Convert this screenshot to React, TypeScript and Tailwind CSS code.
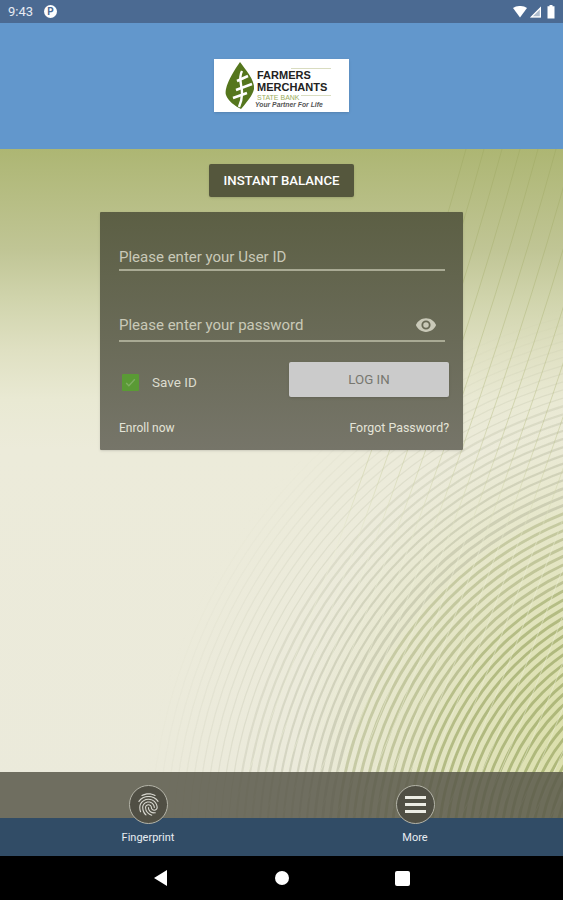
import React from "react";
import { MdFingerprint } from "react-icons/md";

const arcRadii = Array.from({ length: 62 }, (_, i) => 90 + i * 7.8);
const sweepLines = Array.from({ length: 26 }, (_, i) => 466 + i * 18);

const arcColor = (r: number) => {
  if (r < 300) return "#93a05a";
  if (r < 370) return "#9ca46e";
  return "#a6a98e";
};

const Backdrop = () => (
  <svg
    className="absolute inset-0 w-full h-full"
    viewBox="0 0 563 669"
    preserveAspectRatio="none"
  >
    <defs>
      <linearGradient id="base" x1="0" y1="0" x2="0" y2="1">
        <stop offset="0" stopColor="#adb673" />
        <stop offset="0.15" stopColor="#c0c595" />
        <stop offset="0.224" stopColor="#d0d4ac" />
        <stop offset="0.3" stopColor="#dfe0c2" />
        <stop offset="0.374" stopColor="#e9e9d3" />
        <stop offset="0.45" stopColor="#ecebda" />
        <stop offset="1" stopColor="#ebeadb" />
      </linearGradient>
      <radialGradient id="fade" cx="700" cy="701" r="560" gradientUnits="userSpaceOnUse">
        <stop offset="0" stopColor="#fff" stopOpacity="1" />
        <stop offset="0.45" stopColor="#fff" stopOpacity="1" />
        <stop offset="0.74" stopColor="#fff" stopOpacity="0.55" />
        <stop offset="0.88" stopColor="#fff" stopOpacity="0.25" />
        <stop offset="1" stopColor="#fff" stopOpacity="0" />
      </radialGradient>
      <radialGradient id="tint" cx="640" cy="600" r="340" gradientUnits="userSpaceOnUse">
        <stop offset="0" stopColor="#d6dc9c" stopOpacity="0.95" />
        <stop offset="1" stopColor="#d6dc9c" stopOpacity="0" />
      </radialGradient>
      <linearGradient id="sweep" gradientUnits="userSpaceOnUse" x1="0" y1="0" x2="0" y2="669">
        <stop offset="0" stopColor="#98a25a" stopOpacity="0.35" />
        <stop offset="0.4" stopColor="#a8b06c" stopOpacity="0.35" />
        <stop offset="0.6" stopColor="#eef0d8" stopOpacity="0.5" />
        <stop offset="1" stopColor="#eef0d8" stopOpacity="0.5" />
      </linearGradient>
      <mask id="arcMask">
        <rect width="563" height="669" fill="url(#fade)" />
      </mask>
    </defs>
    <rect width="563" height="669" fill="url(#base)" />
    <rect width="563" height="669" fill="url(#tint)" />
    <g mask="url(#arcMask)" fill="none">
      {arcRadii.map((r) => (
        <circle
          key={r}
          cx="700"
          cy="701"
          r={r}
          stroke={arcColor(r)}
          strokeWidth={r > 470 ? 1.2 : r > 390 ? 2.2 : 2.9}
          strokeOpacity="0.62"
        />
      ))}
    </g>
    <g fill="none" stroke="url(#sweep)" strokeWidth="1">
      {sweepLines.map((x) => (
        <path key={x} d={`M${x} 0 Q${x - 52} 190 ${x - 130} 400 T${x - 240} 669`} />
      ))}
    </g>
  </svg>
);

const Logo = () => (
  <div className="relative w-[135px] h-[53px] bg-white flex items-center pl-[10px] gap-[1px] shadow-sm">
    <svg width="32" height="48" viewBox="0 0 32 48" fill="none">
      <path d="M16 0 C21 7 31 18 30 27 C29 33 22 41 17 47 C11 44 4 39 2 33 C0 25 9 10 16 0Z" fill="#55761d" />
      <path d="M24 14 L13 19 M28 22 L12 28 M9 36 L23 31" stroke="#fff" strokeWidth="2.6" />
      <path d="M18 9 C12 20 23 26 15 45" stroke="#fff" strokeWidth="2.4" />
    </svg>
    <div className="flex flex-col leading-none mt-[8px]" style={{ fontFamily: "'Liberation Sans', sans-serif" }}>
      <span className="text-[11px] font-bold text-[#222]">FARMERS</span>
      <span className="text-[11px] font-bold text-[#222] mt-[1px]">MERCHANTS</span>
      <span className="text-[7px] text-[#9aad5a] mt-[1px]">STATE BANK</span>
      <span className="text-[6.8px] italic font-bold text-[#555] mt-[1px] -ml-[2px]">Your Partner For Life</span>
    </div>
    <span className="absolute right-[18px] top-[9px] w-[40px] h-px bg-[#d9dcc0]" />
    <span className="absolute right-[18px] top-[36px] w-[30px] h-px bg-[#d9dcc0]" />
  </div>
);

const Field = ({ label, tall, children }: { label: string; tall?: boolean; children?: React.ReactNode }) => (
  <div className={`flex items-start justify-between border-b-2 border-[#a9aa94] text-[15px] text-[#c9c9b8] ${tall ? "h-[28px]" : "h-[25px]"}`}>
    <span>{label}</span>
    {children}
  </div>
);

const App = () => {
  return (
    <div className="w-[563px] h-[900px] flex flex-col overflow-hidden" style={{ fontFamily: "Roboto, sans-serif" }}>
      {/* status bar */}
      <div className="h-[23px] bg-[#4b6a92] flex items-center justify-between pl-[8px] pr-[7px] text-white">
        <div className="flex items-center gap-[11px]">
          <span className="text-[13px] text-[#e6ebf2]">9:43</span>
          <span className="w-[13px] h-[13px] rounded-full bg-white text-[#4b6a92] text-[10px] font-bold flex items-center justify-center">P</span>
        </div>
        <div className="flex items-center gap-[2px]">
          <svg width="14" height="12" viewBox="0 0 14 12"><path d="M0 2 C4 -0.7 10 -0.7 14 2 L7 11.5Z" fill="#fff" /></svg>
          <svg width="12" height="12" viewBox="0 0 12 12">
            <path d="M12 0.5 V11.5 H1Z" fill="#fff" fillOpacity="0.55" />
            <path d="M12 0.5 V11.5 H1Z M10.8 3.4 L3.9 10.3 H10.8Z" fill="#fff" fillRule="evenodd" />
          </svg>
          <svg width="10" height="14" viewBox="0 0 10 14" className="ml-[3px]"><path d="M3.5 0 H6.5 V1.2 H8.5 V13.5 H1.5 V1.2 H3.5Z" fill="#fff" /></svg>
        </div>
      </div>

      {/* header */}
      <div className="h-[126px] bg-[#6297cc] flex items-start justify-center pt-[36px]">
        <Logo />
      </div>

      {/* main */}
      <div className="relative flex-1 flex flex-col items-center">
        <Backdrop />
        <div className="relative flex flex-col items-center mt-[15px]">
          <button className="w-[145px] h-[33px] bg-[#55573d] rounded-[2px] text-white text-[13.2px] font-medium shadow-sm">
            INSTANT BALANCE
          </button>
          <div className="w-[363px] h-[238px] mt-[15px] bg-linear-to-b from-[#5c5f44] to-[#767569] rounded-[1px] shadow pl-[19px] pr-[18px] pt-[34px] flex flex-col">
            <Field label="Please enter your User ID" />
            <div className="mt-[43px]">
              <Field label="Please enter your password" tall>
                <svg width="22" height="22" viewBox="0 0 24 24" className="mr-[8px]">
                  <path
                    d="M12 4.5C7 4.5 2.7 7.6 1 12c1.7 4.4 6 7.5 11 7.5s9.3-3.1 11-7.5c-1.7-4.4-6-7.5-11-7.5zM12 17a5 5 0 1 1 0-10 5 5 0 0 1 0 10zm0-8a3 3 0 1 0 0 6 3 3 0 0 0 0-6z"
                    fill="#c9c9b8"
                  />
                </svg>
              </Field>
            </div>
            <div className="flex items-center justify-between mt-[20px] mr-[-4px]">
              <div className="flex items-center ml-[3px] mt-[5px]">
                <span className="w-[17px] h-[17px] bg-[#5a9a35] rounded-[1px] flex items-center justify-center">
                  <svg width="13" height="13" viewBox="0 0 24 24" fill="none">
                    <path d="M4 13l5 5L20 6" stroke="#7fae62" strokeWidth="2.5" />
                  </svg>
                </span>
                <span className="ml-[13px] text-[13.5px] text-[#dcdccf]">Save ID</span>
              </div>
              <button className="w-[160px] h-[35px] bg-[#cbcbcb] rounded-[2px] text-[#77776f] text-[13.3px] shadow-sm">
                LOG IN
              </button>
            </div>
            <div className="flex items-center justify-between mt-[22px] mr-[-4px] text-[#e4e4d8]">
              <span className="text-[12px]">Enroll now</span>
              <span className="text-[12.4px]">Forgot Password?</span>
            </div>
          </div>
        </div>
        <div className="relative mt-auto w-full h-[46px] bg-[#59584a]/85" />
      </div>

      {/* tabs */}
      <div className="relative h-[38px] bg-[#314c66] grid grid-cols-[296px_238px] text-[11px] text-[#e8edf2]">
        {[
          { label: "Fingerprint", icon: <MdFingerprint size={27} className="text-[#d8d8d0]" /> },
          {
            label: "More",
            icon: (
              <span className="flex flex-col gap-[4px]">
                <span className="block w-[21px] h-[3px] bg-[#ecece4]" />
                <span className="block w-[21px] h-[3px] bg-[#ecece4]" />
                <span className="block w-[21px] h-[3px] bg-[#ecece4]" />
              </span>
            ),
          },
        ].map((tab) => (
          <div key={tab.label} className="flex flex-col items-center">
            <span className="w-[39px] h-[39px] -mt-[33px] rounded-full bg-[#504f44] border border-[#b4b4a8] flex items-center justify-center">
              {tab.icon}
            </span>
            <span className="mt-[6px]">{tab.label}</span>
          </div>
        ))}
      </div>

      {/* android nav */}
      <div className="h-[44px] bg-black flex items-center">
        <svg width="14" height="16" viewBox="0 0 14 16" className="ml-[154px]"><path d="M13 0 V16 L0 8Z" fill="#fff" /></svg>
        <span className="ml-[107px] w-[14px] h-[14px] rounded-full bg-white" />
        <span className="ml-[106px] w-[15px] h-[15px] rounded-[2px] bg-white" />
      </div>
    </div>
  );
};

export default App;
